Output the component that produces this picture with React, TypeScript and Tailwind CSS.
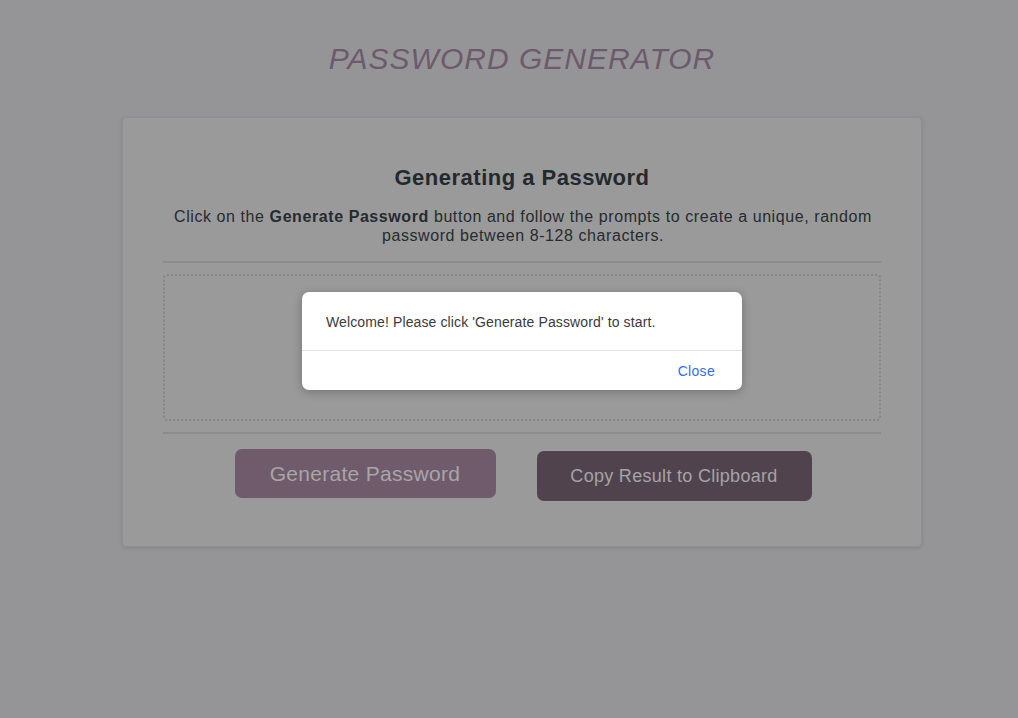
import React from "react";

function WelcomeModal() {
  return (
    <div className="absolute inset-0 flex justify-center pl-[26px] pt-[292px]">
      <div className="h-fit w-[440px] rounded-[7px] bg-white shadow-[0_2px_10px_rgba(0,0,0,0.25)]">
        <p className="h-[59px] border-b border-[#e3e3e3] px-6 pt-[22px] text-[14px] leading-[17px] tracking-[0.12px] text-[#3a3a3a]">
          Welcome! Please click 'Generate Password' to start.
        </p>
        <div className="flex h-[39px] items-center justify-end px-[27px] pt-[1px]">
          <button className="text-[14px] tracking-[0.3px] text-[#2f6ff0]">Close</button>
        </div>
      </div>
    </div>
  );
}

export default function App() {
  return (
    <div className="relative min-h-[718px] bg-[#959598] font-['Liberation_Sans',Arial,sans-serif]">
      <div className="flex flex-col items-center pl-[26px] pt-[40px]">
        <h1 className="text-[30px] leading-[38px] font-normal italic tracking-[1px] text-[#6d5a6b]">
          PASSWORD GENERATOR
        </h1>

        <main className="mt-[39px] w-[800px] rounded-[4px] border border-[#8f8f90] bg-[#9a9a9a] px-10 pt-[47px] pb-[45px] shadow-[0_1px_4px_rgba(0,0,0,0.12)]">
          <h2 className="text-center text-[22px] leading-[26px] font-bold tracking-[0.5px] text-[#23292d]">
            Generating a Password
          </h2>
          <p className="mx-auto mt-[16px] w-[720px] text-center text-[16px] leading-[19px] tracking-[0.58px] text-[#262b30]">
            Click on the <b>Generate Password</b> button and follow the prompts
            to create a unique, random password between 8-128 characters.
          </p>

          <hr className="mt-[16px] border-t-2 border-[#8c8c8c]" />
          <div className="mt-[11px] h-[147px] rounded-[4px] border-2 border-dotted border-[#868686]" />
          <hr className="mt-[11px] border-t-2 border-[#8c8c8c]" />

          <div className="mt-[15px] flex items-start justify-center gap-[41px] pl-[2px]">
            <button className="h-[49px] w-[261px] rounded-[7px] bg-[#705b6d] text-[21px] tracking-[0.3px] text-[#a6a6a7]">
              Generate Password
            </button>
            <button className="mt-[2px] h-[50px] w-[275px] rounded-[7px] bg-[#51434e] text-[18px] tracking-[0.3px] text-[#a4a4a5]">
              Copy Result to Clipboard
            </button>
          </div>
        </main>
      </div>

      <WelcomeModal />
    </div>
  );
}
